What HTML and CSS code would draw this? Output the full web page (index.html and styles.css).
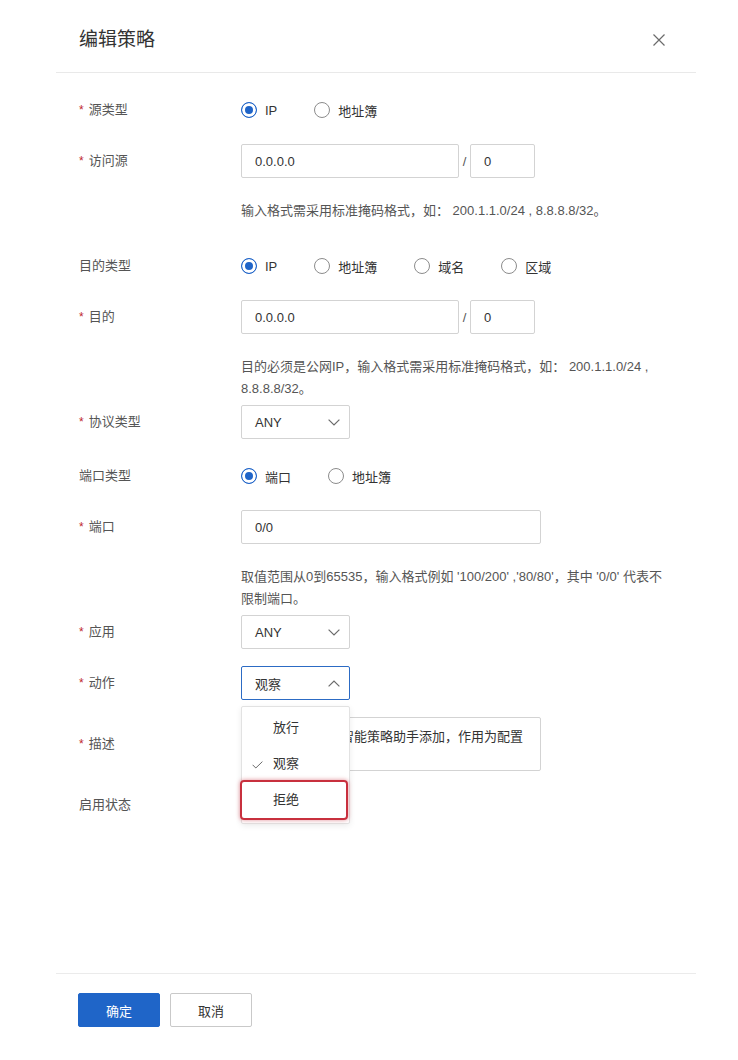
FILE: index.html
```html
<!DOCTYPE html>
<html lang="zh-CN">
<head>
<meta charset="utf-8">
<title>编辑策略</title>
<link rel="stylesheet" href="styles.css">
</head>
<body>
<div class="modal">
  <header class="modal-header">
    <h1 class="modal-title">编辑策略</h1>
    <span class="close" aria-label="关闭">
      <svg width="14" height="14" viewBox="0 0 14 14"><path d="M1.5 1.5L12.5 12.5M12.5 1.5L1.5 12.5" stroke="#6b6b6b" stroke-width="1.2" fill="none"/></svg>
    </span>
  </header>

  <div class="modal-body">
    <div class="form">
      <div class="item">
        <div class="label"><span class="req">*</span>源类型</div>
        <div class="field">
          <div class="radios">
            <span class="radio checked"><i></i>IP</span>
            <span class="radio"><i></i>地址簿</span>
          </div>
        </div>
      </div>

      <div class="item has-hint">
        <div class="label"><span class="req">*</span>访问源</div>
        <div class="field">
          <div class="ip-row">
            <input class="input ip" value="0.0.0.0">
            <span class="slash">/</span>
            <input class="input mask" value="0">
          </div>
          <div class="hint">输入格式需采用标准掩码格式，如： 200.1.1.0/24 , 8.8.8.8/32。</div>
        </div>
      </div>

      <div class="item">
        <div class="label">目的类型</div>
        <div class="field">
          <div class="radios">
            <span class="radio checked"><i></i>IP</span>
            <span class="radio"><i></i>地址簿</span>
            <span class="radio"><i></i>域名</span>
            <span class="radio"><i></i>区域</span>
          </div>
        </div>
      </div>

      <div class="item has-hint">
        <div class="label"><span class="req">*</span>目的</div>
        <div class="field">
          <div class="ip-row">
            <input class="input ip" value="0.0.0.0">
            <span class="slash">/</span>
            <input class="input mask" value="0">
          </div>
          <div class="hint">目的必须是公网IP，输入格式需采用标准掩码格式，如： 200.1.1.0/24 , 8.8.8.8/32。</div>
        </div>
      </div>

      <div class="item item-gap-lg">
        <div class="label"><span class="req">*</span>协议类型</div>
        <div class="field">
          <div class="select">
            <span>ANY</span>
            <svg class="chev" width="12" height="7" viewBox="0 0 12 7"><path d="M0.6 0.6L6 6L11.4 0.6" stroke="#6b6b6b" stroke-width="1.2" fill="none"/></svg>
          </div>
        </div>
      </div>

      <div class="item">
        <div class="label">端口类型</div>
        <div class="field">
          <div class="radios">
            <span class="radio checked"><i></i>端口</span>
            <span class="radio"><i></i>地址簿</span>
          </div>
        </div>
      </div>

      <div class="item has-hint">
        <div class="label"><span class="req">*</span>端口</div>
        <div class="field">
          <input class="input port" value="0/0">
          <div class="hint">取值范围从0到65535，输入格式例如 '100/200' ,'80/80'，其中 '0/0' 代表不限制端口。</div>
        </div>
      </div>

      <div class="item">
        <div class="label"><span class="req">*</span>应用</div>
        <div class="field">
          <div class="select">
            <span>ANY</span>
            <svg class="chev" width="12" height="7" viewBox="0 0 12 7"><path d="M0.6 0.6L6 6L11.4 0.6" stroke="#6b6b6b" stroke-width="1.2" fill="none"/></svg>
          </div>
        </div>
      </div>

      <div class="item">
        <div class="label"><span class="req">*</span>动作</div>
        <div class="field">
          <div class="select-wrap">
            <div class="select open">
              <span>观察</span>
              <svg class="chev" width="12" height="7" viewBox="0 0 12 7"><path d="M0.6 6.4L6 1L11.4 6.4" stroke="#6b6b6b" stroke-width="1.2" fill="none"/></svg>
            </div>
            <ul class="menu">
              <li class="menu-item">放行</li>
              <li class="menu-item selected">
                <svg class="check" width="11" height="8" viewBox="0 0 11 8"><path d="M0.6 3.8L3.8 7L10.4 0.6" stroke="#6b6b6b" stroke-width="1" fill="none"/></svg>
                观察
              </li>
              <li class="menu-item hl">拒绝</li>
            </ul>
          </div>
        </div>
      </div>

      <div class="item item-center">
        <div class="label"><span class="req">*</span>描述</div>
        <div class="field">
          <textarea class="textarea">该策略由防火墙智能策略助手添加，作用为配置观察策略。</textarea>
        </div>
      </div>

      <div class="item">
        <div class="label">启用状态</div>
        <div class="field">
          <span class="switch"><i></i></span>
        </div>
      </div>
    </div>
  </div>

  <footer class="modal-footer">
    <button class="btn btn-primary">确定</button>
    <button class="btn">取消</button>
  </footer>
</div>
</body>
</html>
```

FILE: styles.css
```css
* {
  box-sizing: border-box;
}

body {
  margin: 0;
  background: #fff;
  font-family: "Liberation Sans", "Noto Sans CJK SC", sans-serif;
  font-size: 13px;
  color: #333;
}

.modal {
  width: 640px;
  margin-left: 56px;
  height: 1060px;
  display: flex;
  flex-direction: column;
}

.modal-header {
  height: 73px;
  border-bottom: 1px solid #e9e9e9;
  display: flex;
  align-items: center;
  justify-content: space-between;
  padding: 8px 30px 0 23px;
}

.modal-title {
  margin: 0;
  font-size: 19px;
  font-weight: normal;
  line-height: 26px;
  color: #333;
}

.close {
  display: flex;
  width: 14px;
  height: 14px;
}

.modal-body {
  flex: 1;
  padding: 20px 0 0 23px;
}

.form {
  display: flex;
  flex-direction: column;
}

.item {
  display: grid;
  grid-template-columns: 162px 432px;
  margin-bottom: 17px;
}

.item.has-hint {
  margin-bottom: 5px;
}

.item.item-gap-lg {
  margin-bottom: 20px;
}

.item-center {
  align-items: center;
}

.label {
  line-height: 34px;
  color: #555;
  white-space: nowrap;
}

.req {
  color: #c0272d;
  font-size: 12px;
  margin-right: 5px;
}

.field {
  min-height: 34px;
}

.radios {
  display: flex;
  align-items: center;
  height: 34px;
}

.radio {
  display: inline-flex;
  align-items: center;
  margin-right: 37px;
  color: #333;
}

.radio i {
  width: 16px;
  height: 16px;
  border: 1px solid #8c8c8c;
  border-radius: 50%;
  margin-right: 8px;
  background: #fff;
}

.radio.checked i {
  border-color: #1f64c8;
  background: #1f64c8;
  box-shadow: inset 0 0 0 3px #fff;
}

.ip-row {
  display: flex;
  align-items: center;
}

.input {
  height: 34px;
  border: 1px solid #d3d3d3;
  border-radius: 2px;
  padding: 0 13px;
  font: inherit;
  color: #333;
  background: #fff;
  outline: none;
}

.input.ip {
  width: 218px;
}

.input.mask {
  width: 65px;
}

.input.port {
  width: 300px;
  display: block;
}

.slash {
  width: 11px;
  text-align: center;
  color: #555;
}

.hint {
  margin-top: 22px;
  min-height: 44px;
  line-height: 22px;
  color: #555;
}

.select-wrap {
  position: relative;
  width: 109px;
}

.select {
  width: 109px;
  height: 34px;
  border: 1px solid #d3d3d3;
  border-radius: 2px;
  display: flex;
  align-items: center;
  justify-content: space-between;
  padding: 0 9px 0 13px;
  color: #333;
  background: #fff;
}

.select.open {
  border-color: #2c6bc4;
}

.menu {
  position: absolute;
  left: 0;
  top: calc(100% + 6px);
  width: 109px;
  margin: 0;
  padding: 3px 0 5px;
  list-style: none;
  background: #fff;
  border: 1px solid #e2e2e2;
  border-radius: 2px;
  box-shadow: 0 2px 6px rgba(0, 0, 0, 0.08);
  z-index: 10;
}

.menu-item {
  position: relative;
  height: 36px;
  line-height: 36px;
  padding-left: 31px;
  color: #333;
}

.check {
  position: absolute;
  left: 10px;
  top: 15px;
}

.menu-item.hl::after {
  content: "";
  position: absolute;
  left: -2px;
  right: 1px;
  top: -2px;
  bottom: -2px;
  border: 2px solid #c8303e;
  border-radius: 4px;
  box-shadow: 0 0 4px rgba(200, 48, 62, 0.55);
}

.textarea {
  display: block;
  width: 300px;
  height: 54px;
  border: 1px solid #d3d3d3;
  border-radius: 2px;
  padding: 8px 8px;
  font: inherit;
  line-height: 22px;
  color: #333;
  resize: none;
  overflow: hidden;
  outline: none;
}

.switch {
  display: inline-block;
  margin-top: 6px;
  width: 44px;
  height: 22px;
  border-radius: 11px;
  background: #1f64c8;
}

.modal-footer {
  height: 87px;
  border-top: 1px solid #ebebeb;
  padding: 19px 0 0 22px;
  display: flex;
  align-items: flex-start;
  gap: 10px;
}

.btn {
  width: 82px;
  height: 34px;
  border: 1px solid #c9c9c9;
  border-radius: 2px;
  background: #fff;
  color: #333;
  font: inherit;
  padding: 0;
}

.btn-primary {
  background: #1f65c8;
  border-color: #1f65c8;
  color: #fff;
}
```
